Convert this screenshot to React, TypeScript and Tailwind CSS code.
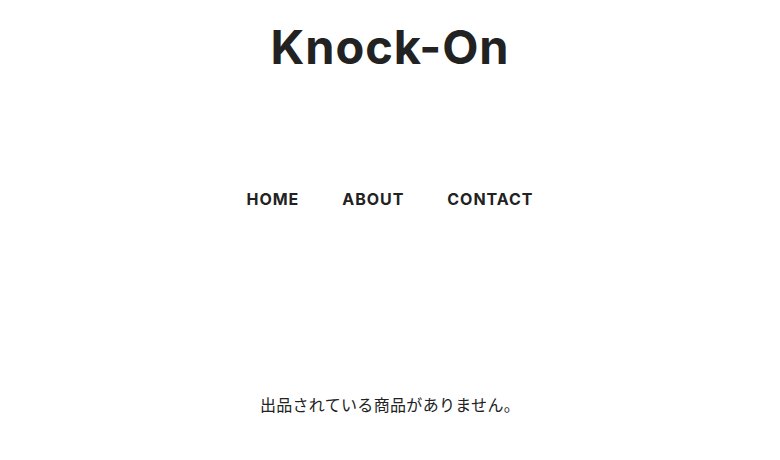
export default function App() {
  return (
    <div
      className="min-h-[460px] bg-white text-[#222] flex flex-col items-center"
      style={{ fontFamily: 'Inter, "Noto Sans CJK JP", sans-serif' }}
    >
      <header className="pt-[18px] flex flex-col items-center">
        <h1 className="text-[47px] leading-[58px] font-bold tracking-[0.02em]">Knock-On</h1>
        <nav className="mt-[113px] flex gap-[43px] text-[16px] font-bold tracking-[0.06em] leading-[20px]">
          <a href="#">HOME</a>
          <a href="#">ABOUT</a>
          <a href="#">CONTACT</a>
        </nav>
      </header>
      <main className="mt-[185px]">
        <p className="text-[16px] leading-[22px] tracking-[0.02em]">出品されている商品がありません。</p>
      </main>
    </div>
  );
}
